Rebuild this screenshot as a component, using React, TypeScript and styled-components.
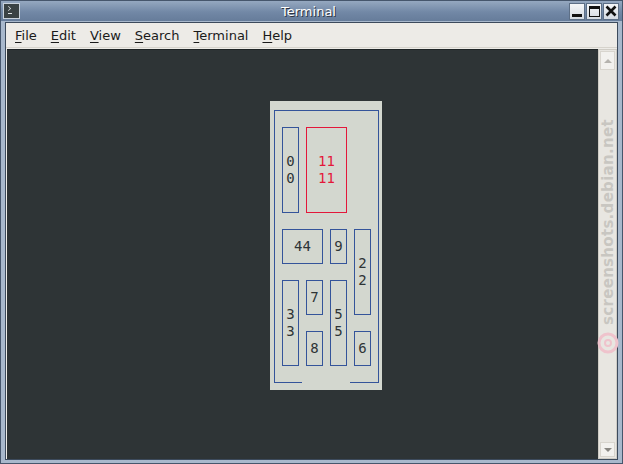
import styled, { createGlobalStyle } from 'styled-components';

const GlobalStyle = createGlobalStyle`
  html, body {
    margin: 0;
    padding: 0;
    background: #2e3436;
  }
  * { box-sizing: border-box; }
`;

const Window = styled.div`
  width: 623px;
  height: 464px;
  display: flex;
  flex-direction: column;
  background: #a8b8cc;
  border: 1px solid #46566c;
  font-family: 'DejaVu Sans', 'Liberation Sans', sans-serif;
  overflow: hidden;
`;

const TitleBar = styled.div`
  height: 20px;
  flex: none;
  display: flex;
  align-items: center;
  padding: 0 3px 0 2px;
  background: linear-gradient(#95a8c0, #7288a6 55%, #667c9a);
  position: relative;
`;

const AppIcon = styled.div`
  width: 17px;
  height: 16px;
  border: 1px solid #c9d2dc;
  background: #3a4244;
  position: relative;

  &::before {
    content: '';
    position: absolute;
    left: 2px;
    top: 2px;
    width: 4px;
    height: 4px;
    border-right: 1px solid #dfe3e6;
    border-bottom: 1px solid #dfe3e6;
    transform: rotate(-45deg) scale(0.7);
  }
  &::after {
    content: '';
    position: absolute;
    left: 4px;
    top: 9px;
    width: 4px;
    height: 1px;
    background: #dfe3e6;
  }
`;

const Title = styled.div`
  flex: 1;
  text-align: center;
  color: #ffffff;
  font-size: 13px;
  padding-left: 28px;
  text-shadow: 1px 1px 0 #2e3440;
`;

const Buttons = styled.div`
  display: flex;
  gap: 1px;
`;

const WinButton = styled.div`
  width: 16px;
  height: 17px;
  background: linear-gradient(#f4f6f8, #d4dae2);
  border: 1px solid #5d6f86;
  display: flex;
  align-items: center;
  justify-content: center;
  color: #111;
`;

const MinGlyph = styled.div`
  width: 10px;
  height: 3px;
  background: #111;
  margin-top: 8px;
`;

const MaxGlyph = styled.div`
  width: 11px;
  height: 11px;
  border: 1px solid #111;
  border-top-width: 3px;
`;

const Body = styled.div`
  flex: 1;
  display: flex;
  flex-direction: column;
  padding: 1px 4px 3px 4px;
  min-height: 0;
`;

const Inner = styled.div`
  flex: 1;
  display: flex;
  flex-direction: column;
  border: 1px solid #3c4a5c;
  background: #edebe7;
  min-height: 0;
`;

const MenuBar = styled.div`
  height: 25px;
  flex: none;
  display: flex;
  align-items: center;
  padding-left: 2px;
  font-size: 13px;
  color: #1a1a1a;
  border-bottom: 1px solid #d6d3cc;
`;

const MenuItem = styled.span`
  padding: 0 7px;
  & u { text-underline-offset: 2px; }
`;

const ContentRow = styled.div`
  flex: 1;
  display: flex;
  min-height: 0;
  padding: 1px 0 0 1px;
`;

const TermArea = styled.div`
  flex: 1;
  background: #2e3436;
  border-top: 1px solid #1f2426;
  padding: 51px 0 0 263px;
`;

const Scrollbar = styled.div`
  width: 19px;
  flex: none;
  background: #e8e6e1;
  border: 1px solid #cfccc5;
  display: flex;
  flex-direction: column;
  justify-content: space-between;
  position: relative;
`;

const ArrowBtn = styled.div<{ $down?: boolean }>`
  height: ${(p) => (p.$down ? 15 : 19)}px;
  margin: 1px;
  border: 1px solid #d8d5ce;
  background: #f2f1ee;
  display: flex;
  align-items: center;
  justify-content: center;

  &::after {
    content: '';
    width: 0;
    height: 0;
    border-left: 4px solid transparent;
    border-right: 4px solid transparent;
    ${(p) =>
      p.$down
        ? 'border-top: 4px solid #8a8883;'
        : 'border-bottom: 4px solid #b5b3ae;'}
  }
`;

const Watermark = styled.div`
  position: absolute;
  left: 50%;
  top: 172px;
  transform: translate(-50%, -50%) rotate(-90deg);
  white-space: nowrap;
  font-size: 15px;
  font-weight: bold;
  color: #c8c6c1;
  letter-spacing: 0.3px;
`;

const Swirl = styled.svg`
  position: absolute;
  left: -2px;
  top: 280px;
`;

const Panel = styled.div`
  width: 112px;
  height: 289px;
  background: #d3d7cf;
  padding: 9px 0 0 4px;
`;

const Frame = styled.div`
  width: 105px;
  height: 273px;
  border: 1px solid #34549a;
  border-bottom: none;
  position: relative;

  &::before,
  &::after {
    content: '';
    position: absolute;
    bottom: 0;
    height: 1px;
    background: #34549a;
  }
  &::before { left: -1px; width: 28px; }
  &::after { right: -1px; width: 29px; }
`;

const Grid = styled.div`
  display: grid;
  grid-template-columns: repeat(12, 8px);
  grid-template-rows: repeat(15, 17px);
  padding: 16px 0 0 7px;
`;

const Box = styled.div<{ $c: number; $r: number; $w: number; $h: number; $red?: boolean }>`
  grid-column: ${(p) => p.$c} / span ${(p) => p.$w};
  grid-row: ${(p) => p.$r} / span ${(p) => p.$h};
  width: calc(100% + 1px);
  height: calc(100% + 1px);
  border: 1px solid ${(p) => (p.$red ? '#e3173a' : '#34549a')};
  color: ${(p) => (p.$red ? '#e3173a' : '#2e3436')};
  display: flex;
  flex-direction: column;
  align-items: center;
  justify-content: center;
  padding-bottom: 1px;
  font-family: 'DejaVu Sans Mono', 'Liberation Mono', monospace;
  font-size: 14px;
  line-height: 17px;
`;

const boxes = [
  { c: 1, r: 1, w: 2, h: 5, lines: ['0', '0'] },
  { c: 4, r: 1, w: 5, h: 5, lines: ['11', '11'], red: true },
  { c: 1, r: 7, w: 5, h: 2, lines: ['44'] },
  { c: 7, r: 7, w: 2, h: 2, lines: ['9'] },
  { c: 10, r: 7, w: 2, h: 5, lines: ['2', '2'] },
  { c: 1, r: 10, w: 2, h: 5, lines: ['3', '3'] },
  { c: 4, r: 10, w: 2, h: 2, lines: ['7'] },
  { c: 7, r: 10, w: 2, h: 5, lines: ['5', '5'] },
  { c: 4, r: 13, w: 2, h: 2, lines: ['8'] },
  { c: 10, r: 13, w: 2, h: 2, lines: ['6'] },
];

const menus = ['File', 'Edit', 'View', 'Search', 'Terminal', 'Help'];

export default function App() {
  return (
    <>
      <GlobalStyle />
      <Window>
        <TitleBar>
          <AppIcon />
          <Title>Terminal</Title>
          <Buttons>
            <WinButton><MinGlyph /></WinButton>
            <WinButton><MaxGlyph /></WinButton>
            <WinButton>
              <svg width="12" height="12" viewBox="0 0 12 12">
                <path d="M1.5 1.5 L10.5 10.5 M10.5 1.5 L1.5 10.5" stroke="#111" strokeWidth="2.6" />
              </svg>
            </WinButton>
          </Buttons>
        </TitleBar>
        <Body>
          <Inner>
            <MenuBar>
              {menus.map((m) => (
                <MenuItem key={m}>
                  <u>{m[0]}</u>
                  {m.slice(1)}
                </MenuItem>
              ))}
            </MenuBar>
            <ContentRow>
              <TermArea>
                <Panel>
                  <Frame>
                    <Grid>
                      {boxes.map((b, i) => (
                        <Box key={i} $c={b.c} $r={b.r} $w={b.w} $h={b.h} $red={b.red}>
                          {b.lines.map((l, j) => (
                            <span key={j}>{l}</span>
                          ))}
                        </Box>
                      ))}
                    </Grid>
                  </Frame>
                </Panel>
              </TermArea>
              <Scrollbar>
                <ArrowBtn />
                <ArrowBtn $down />
                <Watermark>screenshots.debian.net</Watermark>
                <Swirl width="22" height="26" viewBox="0 0 22 26">
                  <circle cx="11" cy="13" r="9" fill="none" stroke="#efc3cc" strokeWidth="3" />
                  <circle cx="11" cy="13" r="3" fill="none" stroke="#efc3cc" strokeWidth="2" />
                </Swirl>
              </Scrollbar>
            </ContentRow>
          </Inner>
        </Body>
      </Window>
    </>
  );
}
